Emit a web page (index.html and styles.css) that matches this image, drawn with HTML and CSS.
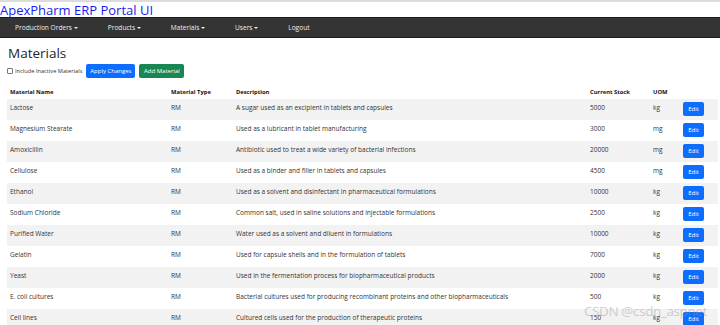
FILE: index.html
```html
<!DOCTYPE html>
<html lang="en">
<head>
    <meta charset="UTF-8">
    <meta name="viewport" content="width=device-width, initial-scale=1.0">
    <title>Materials - ApexPharm ERP Portal UI</title>
    <link rel="stylesheet" href="styles.css">
</head>
<body>
    <div class="site-title">ApexPharm ERP Portal UI</div>

    <nav class="navbar">
        <a href="#" class="nav-item">Production Orders <span class="caret"></span></a>
        <a href="#" class="nav-item">Products <span class="caret"></span></a>
        <a href="#" class="nav-item">Materials <span class="caret"></span></a>
        <a href="#" class="nav-item">Users <span class="caret"></span></a>
        <a href="#" class="nav-item">Logout</a>
    </nav>

    <div class="container">
        <h1>Materials</h1>

        <div class="toolbar">
            <label class="check-label"><span class="check"></span>Include Inactive Materials</label>
            <button class="btn btn-primary">Apply Changes</button>
            <button class="btn btn-success">Add Material</button>
        </div>

        <table class="table">
            <colgroup>
                <col class="col-name">
                <col class="col-type">
                <col class="col-desc">
                <col class="col-stock">
                <col class="col-uom">
                <col class="col-edit">
            </colgroup>
            <thead>
                <tr>
                    <th>Material Name</th>
                    <th>Material Type</th>
                    <th>Description</th>
                    <th>Current Stock</th>
                    <th>UOM</th>
                    <th></th>
                </tr>
            </thead>
            <tbody>
                <tr>
                    <td>Lactose</td><td>RM</td>
                    <td>A sugar used as an excipient in tablets and capsules</td>
                    <td>5000</td><td>kg</td>
                    <td><button class="btn btn-edit">Edit</button></td>
                </tr>
                <tr>
                    <td>Magnesium Stearate</td><td>RM</td>
                    <td>Used as a lubricant in tablet manufacturing</td>
                    <td>3000</td><td>mg</td>
                    <td><button class="btn btn-edit">Edit</button></td>
                </tr>
                <tr>
                    <td>Amoxicillin</td><td>RM</td>
                    <td>Antibiotic used to treat a wide variety of bacterial infections</td>
                    <td>20000</td><td>mg</td>
                    <td><button class="btn btn-edit">Edit</button></td>
                </tr>
                <tr>
                    <td>Cellulose</td><td>RM</td>
                    <td>Used as a binder and filler in tablets and capsules</td>
                    <td>4500</td><td>mg</td>
                    <td><button class="btn btn-edit">Edit</button></td>
                </tr>
                <tr>
                    <td>Ethanol</td><td>RM</td>
                    <td>Used as a solvent and disinfectant in pharmaceutical formulations</td>
                    <td>10000</td><td>kg</td>
                    <td><button class="btn btn-edit">Edit</button></td>
                </tr>
                <tr>
                    <td>Sodium Chloride</td><td>RM</td>
                    <td>Common salt, used in saline solutions and injectable formulations</td>
                    <td>2500</td><td>kg</td>
                    <td><button class="btn btn-edit">Edit</button></td>
                </tr>
                <tr>
                    <td>Purified Water</td><td>RM</td>
                    <td>Water used as a solvent and diluent in formulations</td>
                    <td>10000</td><td>kg</td>
                    <td><button class="btn btn-edit">Edit</button></td>
                </tr>
                <tr>
                    <td>Gelatin</td><td>RM</td>
                    <td>Used for capsule shells and in the formulation of tablets</td>
                    <td>7000</td><td>kg</td>
                    <td><button class="btn btn-edit">Edit</button></td>
                </tr>
                <tr>
                    <td>Yeast</td><td>RM</td>
                    <td>Used in the fermentation process for biopharmaceutical products</td>
                    <td>2000</td><td>kg</td>
                    <td><button class="btn btn-edit">Edit</button></td>
                </tr>
                <tr>
                    <td>E. coli cultures</td><td>RM</td>
                    <td>Bacterial cultures used for producing recombinant proteins and other biopharmaceuticals</td>
                    <td>500</td><td>kg</td>
                    <td><button class="btn btn-edit">Edit</button></td>
                </tr>
                <tr>
                    <td>Cell lines</td><td>RM</td>
                    <td>Cultured cells used for the production of therapeutic proteins</td>
                    <td>150</td><td>kg</td>
                    <td><button class="btn btn-edit">Edit</button></td>
                </tr>
            </tbody>
        </table>
    </div>

    <div class="watermark">CSDN @csdn_aspnet</div>
</body>
</html>
```

FILE: styles.css
```css
body {
    margin: 0;
    font-family: "Open Sans", "Noto Sans", sans-serif;
    color: #212529;
    background: #fff;
    border-top: 2px solid #dcdcdc;
    overflow: hidden;
}
.site-title {
    color: #1a1aee;
    font-size: 13px;
    line-height: 14px;
    padding-top: 1px;
}
.navbar {
    display: flex;
    height: 19px;
    align-items: center;
    background: #343434;
    border-top: 1px solid #1c1c1c;
    border-bottom: 1px solid #1c1c1c;
}
.nav-item {
    color: #eee;
    text-decoration: none;
    font-size: 6.6px;
    padding: 0 15px;
}
.caret {
    display: inline-block;
    width: 0;
    height: 0;
    border-left: 2px solid transparent;
    border-right: 2px solid transparent;
    border-top: 2px solid #eee;
    vertical-align: 1px;
}
.container {
    padding: 0 7px;
}
h1 {
    font-size: 13.5px;
    font-weight: 500;
    margin: 7px 0 1px 1px;
    line-height: 17px;
}
.toolbar {
    display: flex;
    align-items: center;
    height: 15px;
}
.check-label {
    display: flex;
    align-items: center;
    font-size: 5.7px;
    color: #333;
    margin-right: 4px;
}
.check {
    width: 4px;
    height: 4px;
    border: 1px solid #777;
    border-radius: 1px;
    margin: 0 2px 0 0;
}
.btn {
    border: none;
    border-radius: 2px;
    color: #fff;
    font-family: inherit;
    font-size: 6px;
    padding: 0;
    height: 14px;
    cursor: pointer;
}
.btn-primary {
    background: #0d6efd;
    width: 49px;
    margin-right: 4px;
}
.btn-success {
    background: #198754;
    width: 45px;
}
.table {
    width: 711px;
    border-collapse: collapse;
    table-layout: fixed;
    margin-top: 6px;
    font-size: 6.5px;
}
.col-name { width: 161px; }
.col-type { width: 65px; }
.col-desc { width: 354px; }
.col-stock { width: 63px; }
.col-uom { width: 30px; }
.table th {
    text-align: left;
    font-weight: 700;
    padding: 0 3px 3px;
    height: 12px;
    vertical-align: bottom;
    color: #111;
    font-size: 5.8px;
}
.table td {
    padding: 4px 3px 0;
    height: 17px;
    vertical-align: top;
    white-space: nowrap;
    color: #333;
}
.table tbody tr:nth-child(odd) {
    background: #f2f2f2;
}
.table td:last-child {
    padding-top: 3px;
}
.btn-edit {
    background: #0d6efd;
    width: 21px;
    height: 14px;
    font-size: 6px;
}
.watermark {
    position: absolute;
    left: 584px;
    top: 302px;
    font-size: 13.5px;
    color: rgba(150, 150, 150, 0.45);
    letter-spacing: -0.4px;
}
```
